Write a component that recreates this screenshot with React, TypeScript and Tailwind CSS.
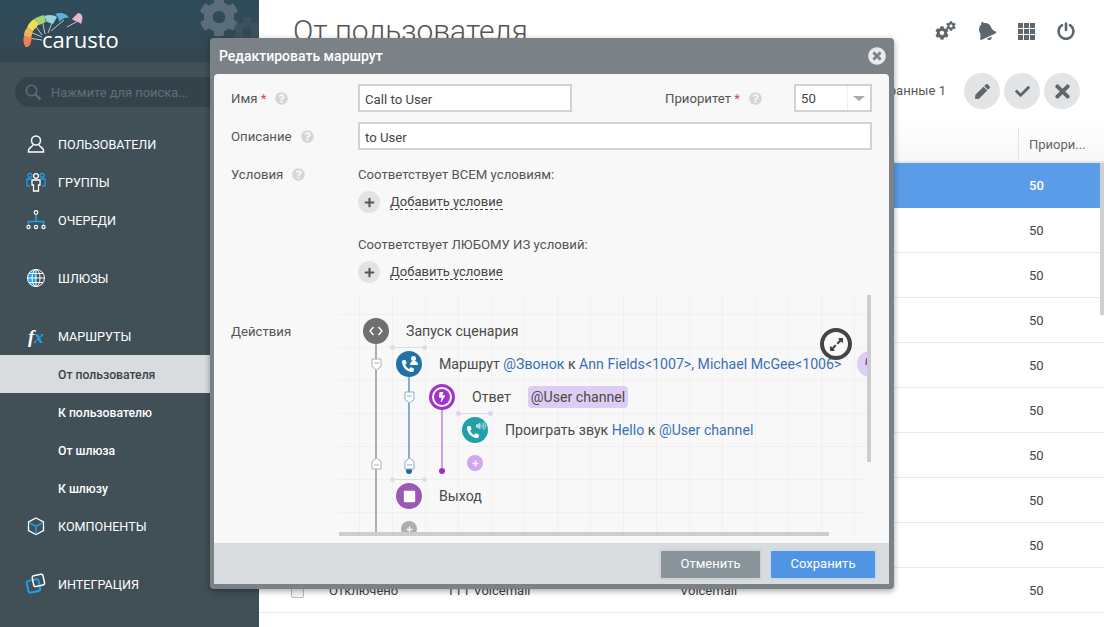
import { FaBell, FaCheck, FaCog, FaExpandAlt, FaPen, FaPhone, FaPlus, FaQuestionCircle, FaStop, FaTimes, FaTimesCircle, FaBolt, FaVolumeUp } from "react-icons/fa";

const Logo = () => (
  <svg width="66" height="36" viewBox="0 0 66 36" className="absolute left-[22px] top-[11px]">
    <g fill="none" strokeWidth="0.8" stroke="#dfe7ea">
      <path d="M20 29 L6 27 M20 26 L8 21 M20 24 L12 13 M23 23 L20 8 M26 22 L31 9 M29 20 L42 9 M45 16 L58 9" />
    </g>
    <path d="M4 37 C1 32 1 28 2 25 L10 27 L8 34 Z" fill="#ee7f58" />
    <path d="M2 25 C2 21 3 19 5 17 L11 20 L9 27 Z" fill="#f2b25a" />
    <path d="M5 17 C6 13 9 10 12 8 L17 13 L11 20 Z" fill="#ecdf58" />
    <path d="M12 8 C15 6 18 5 22 4 L24 11 L17 14 Z" fill="#a8d26b" />
    <path d="M22 5 C27 3 32 4 35 6 L31 13 L25 11 Z" fill="#8fd6e0" />
    <path d="M33 3 C38 1 45 2 47 7 C43 6 40 8 37 11 C37 8 36 5 33 3 Z" fill="#59aee2" />
    <path d="M56 2 C60 2 62 6 59 13 C56 10 52 10 50 8 C52 6 54 4 56 2 Z" fill="#eab3d2" />
  </svg>
);

const SearchIcon = () => (
  <svg width="17" height="17" viewBox="0 0 17 17" fill="none" stroke="#5d6c74">
    <circle cx="6.5" cy="6.5" r="5.2" strokeWidth="1.5" />
    <path d="M10.5 10.5 L15.5 15.5" strokeWidth="2.4" />
  </svg>
);

const UserIcon = () => (
  <svg width="20" height="20" viewBox="0 0 20 20" fill="none" stroke="#fff" strokeWidth="1.5">
    <circle cx="10" cy="6.5" r="4.5" />
    <path d="M7 10.5 C7 13 2.5 13.5 2.5 16.5 V18 H17.5 V16.5 C17.5 13.5 13 13 13 10.5" />
  </svg>
);

const GroupIcon = () => (
  <svg width="20" height="20" viewBox="0 0 20 20" fill="none" strokeWidth="1.3">
    <g stroke="#1da1e8">
      <circle cx="4" cy="3.5" r="2" />
      <circle cx="16" cy="3.5" r="2" />
      <path d="M1 14 V7 H5 M19 14 V7 H15 M1 14 H4 M19 14 H16" />
    </g>
    <g stroke="#fff">
      <circle cx="10" cy="4" r="2.4" />
      <path d="M6 8 H14 V13 H12.5 V19 H7.5 V13 H6 Z" />
    </g>
  </svg>
);

const QueueIcon = () => (
  <svg width="20" height="20" viewBox="0 0 20 20" fill="none" strokeWidth="1.2">
    <path d="M10 5 V12 M2.5 15 V11.5 H17.5 V15" stroke="#1da1e8" strokeWidth="1.6" />
    <g stroke="#fff">
      <circle cx="10" cy="2.5" r="1.8" />
      <circle cx="2.5" cy="17" r="1.6" />
      <circle cx="10" cy="17" r="1.6" />
      <circle cx="17.5" cy="17" r="1.6" />
    </g>
  </svg>
);

const GlobeIcon = () => (
  <svg width="20" height="20" viewBox="0 0 20 20" fill="none" strokeWidth="1">
    <path d="M10 1 A9 9 0 0 0 10 19 Z" fill="#1da1e8" />
    <g stroke="#fff">
      <circle cx="10" cy="10" r="8.5" />
      <ellipse cx="10" cy="10" rx="4" ry="8.5" />
      <path d="M10 1 V19 M1.5 10 H18.5 M3 5.5 H17 M3 14.5 H17" />
    </g>
  </svg>
);

const CubeIcon = () => (
  <svg width="20" height="20" viewBox="0 0 20 20" fill="none" strokeWidth="1.3">
    <path d="M10 2 L17.5 6 V14.5 L10 18.5 L2.5 14.5 V6 Z" stroke="#fff" />
    <path d="M3 6.5 L10 10.5 L17 6.5 M10 10.5 V18" stroke="#1da1e8" strokeWidth="1.5" />
  </svg>
);

const IntegrationIcon = () => (
  <svg width="20" height="22" viewBox="0 0 20 22" fill="none">
    <rect x="1.5" y="7" width="12" height="12" rx="2" stroke="#1da1e8" strokeWidth="2" transform="rotate(-12 7 13)" />
    <rect x="7" y="2" width="11" height="11" rx="2" stroke="#fff" strokeWidth="1.5" transform="rotate(-12 12 8)" />
  </svg>
);

const GridIcon = () => (
  <svg width="17" height="17" viewBox="0 0 17 17" fill="#5d686e">
    <rect x="0" y="0" width="5" height="5" />
    <rect x="6" y="0" width="5" height="5" />
    <rect x="12" y="0" width="5" height="5" />
    <rect x="0" y="6" width="5" height="5" />
    <rect x="6" y="6" width="5" height="5" />
    <rect x="12" y="6" width="5" height="5" />
    <rect x="0" y="12" width="5" height="5" />
    <rect x="6" y="12" width="5" height="5" />
    <rect x="12" y="12" width="5" height="5" />
  </svg>
);

const PowerIcon = () => (
  <svg width="18" height="18" viewBox="0 0 18 18" fill="none" stroke="#5d686e" strokeWidth="2.6" strokeLinecap="round">
    <path d="M5 3.2 A7.4 7.4 0 1 0 13 3.2" />
    <path d="M9 1.5 V8" />
  </svg>
);

const Marker = ({ color, up }: { color: string; up?: boolean }) => (
  <svg width="11" height="13" viewBox="0 0 11 13" className={up ? "rotate-180" : ""}>
    <path d="M1 1 H10 V8.5 L5.5 12 L1 8.5 Z" fill="#fff" stroke={color} strokeWidth="1" />
    <path d="M3 5 H8" stroke={color} strokeWidth="1" />
  </svg>
);

const Help = () => <FaQuestionCircle className="text-[13px] text-[#d6d6d6]" />;

const AddButton = () => (
  <div className="flex items-center gap-[10px] h-[22px]">
    <div className="w-[22px] h-[22px] rounded-full bg-[#e2e3e5] flex items-center justify-center">
      <FaPlus className="text-[11px] text-[#555]" />
    </div>
    <span className="text-[13px] text-[#444] border-b border-dashed border-[#444] leading-[15px]">Добавить условие</span>
  </div>
);

const navTop = [
  { label: "Пользователи", icon: <UserIcon />, cls: "" },
  { label: "Группы", icon: <GroupIcon />, cls: "" },
  { label: "Очереди", icon: <QueueIcon />, cls: "" },
  { label: "Шлюзы", icon: <GlobeIcon />, cls: "mt-5" },
];

const NavItem = ({ label, icon, cls }: { label: string; icon: React.ReactNode; cls?: string }) => (
  <div className={`h-[38px] flex items-center text-white ${cls}`}>
    <div className="w-[58px] pl-[26px] flex items-center">{icon}</div>
    <span className="text-[12.6px] uppercase mt-[2px]">{label}</span>
  </div>
);

const SubItem = ({ label, active }: { label: string; active?: boolean }) => (
  <div className={`h-[38px] flex items-center pl-[58px] text-[12.2px] font-medium ${active ? "bg-[#d8dcdf] text-[#3c4347]" : "text-white"}`}>
    <span className="mt-[2px]">{label}</span>
  </div>
);

const Sidebar = () => (
  <aside className="w-[259px] h-[627px] shrink-0 bg-[#414f56] overflow-hidden">
    <div className="relative h-[62px] overflow-hidden bg-gradient-to-b from-[#2f4c5c] to-[#34474f]">
      <Logo />
      <span className="absolute left-[42px] top-[22px] text-[22px] leading-[34px] text-white font-['Open_Sans',sans-serif]">carusto</span>
      <FaCog className="absolute left-[199px] top-[-3px] text-[40px] text-[#5a6d78]" />
      <FaCog className="absolute left-[232px] top-[17px] text-[30px] text-[#45596380]" />
    </div>
    <div className="pl-[15px] pt-[15px] h-[63px]">
      <div className="w-[300px] h-[30px] rounded-full bg-[#34434b] flex items-center pl-[10px] gap-[9px]">
        <SearchIcon />
        <span className="text-[12.9px] text-[#5f6f78] mt-[1px]">Нажмите для поиска...</span>
      </div>
    </div>
    {navTop.map((n) => (
      <NavItem key={n.label} {...n} />
    ))}
    <NavItem
      label="Маршруты"
      cls="mt-5"
      icon={
        <span className="ml-[2px] font-['Liberation_Serif',serif] italic font-bold text-[19px] leading-none">
          f<span className="text-[#1da1e8]">x</span>
        </span>
      }
    />
    <SubItem label="От пользователя" active />
    <SubItem label="К пользователю" />
    <SubItem label="От шлюза" />
    <SubItem label="К шлюзу" />
    <NavItem label="Компоненты" icon={<CubeIcon />} />
    <NavItem label="Интеграция" icon={<IntegrationIcon />} cls="mt-5" />
  </aside>
);

const RoundButton = ({ children }: { children: React.ReactNode }) => (
  <div className="w-[36px] h-[36px] rounded-full bg-[#e3e4e6] flex items-center justify-center text-[#5d686e]">{children}</div>
);

const Row = ({ active, last }: { active?: boolean; last?: boolean }) => (
  <div className={`h-[45px] flex items-center border-b pt-[2px] text-[13px] ${active ? "bg-[#5a9ce8] text-white font-medium border-[#5a9ce8]" : "border-[#e8e8e8] text-[#444]"}`}>
    {last ? (
      <>
        <div className="w-[32px] ml-[32px] flex">
          <div className="w-[13px] h-[13px] border border-[#bbb] rounded-[2px] bg-[#f6f6f6]" />
        </div>
        <span className="w-[118px] ml-[6px]">Отключено</span>
        <span className="w-[233px]">TTT Voicemail</span>
        <span className="w-[349px]">Voicemail</span>
      </>
    ) : (
      <div className="w-[770px]" />
    )}
    <span>50</span>
  </div>
);

const Main = () => (
  <main className="relative flex-1 h-[627px] bg-white overflow-hidden">
    <div className="h-[62px] flex items-center justify-between pl-[34px] pr-[18px]">
      <h1 className="text-[30px] font-light text-[#555] leading-[36px] -mt-[1px]">От пользователя</h1>
      <div className="flex items-center text-[#5d686e]">
        <div className="relative w-[40px] h-[20px]">
          <FaCog className="absolute left-[9px] top-[5px] text-[14px]" />
          <FaCog className="absolute left-[20px] top-[0px] text-[10px]" />
        </div>
        <div className="w-[40px] flex justify-center"><FaBell className="text-[20px] -rotate-[25deg]" /></div>
        <div className="w-[40px] flex justify-center"><GridIcon /></div>
        <div className="w-[40px] flex justify-center"><PowerIcon /></div>
      </div>
    </div>
    <div className="h-[56px] flex items-center justify-end pr-[24px] pt-[2px] gap-[4px]">
      <span className="text-[13.1px] text-[#555] mr-[14px]">Выбранные 1</span>
      <RoundButton><FaPen className="text-[15px]" /></RoundButton>
      <RoundButton><FaCheck className="text-[15px]" /></RoundButton>
      <RoundButton><FaTimes className="text-[21px]" /></RoundButton>
    </div>
    <div className="h-[45px] flex items-stretch pl-[759px] bg-gradient-to-b from-white to-[#f7f7f7] border-b-2 border-[#e6e6e6] pt-[10px]">
      <div className="flex items-center border-l border-[#e4e4e4] pl-[10px] text-[13px] text-[#666] w-[80px] whitespace-nowrap">Приори...</div>
    </div>
    <Row active />
    {Array.from({ length: 8 }).map((_, i) => (
      <Row key={i} />
    ))}
    <Row last />
    <div className="absolute right-0 top-[163px] w-[4px] h-[152px] bg-[#cfcfcf]" />
  </main>
);

const FlowRow = ({ cls, children }: { cls: string; children: React.ReactNode }) => (
  <div className={`absolute flex items-center gap-[17px] whitespace-nowrap text-[14.15px] text-[#4a4a4a] [&>span]:mt-[2px] ${cls}`}>{children}</div>
);

const Circle = ({ cls, children }: { cls: string; children: React.ReactNode }) => (
  <div className={`w-[26px] h-[26px] rounded-full shrink-0 flex items-center justify-center text-white ${cls}`}>{children}</div>
);

const Link = ({ children }: { children: React.ReactNode }) => <span className="text-[#3a6fb7]">{children}</span>;

const Handle = ({ cls, dot }: { cls: string; dot: string }) => (
  <div className={`absolute w-[33px] h-[1px] ${cls}`}>
    <div className={`absolute -left-[2px] -top-[2px] w-[5px] h-[5px] rounded-full ${dot}`} />
    <div className={`absolute -right-[2px] -top-[2px] w-[5px] h-[5px] rounded-full ${dot}`} />
  </div>
);

const FlowCanvas = () => (
  <div className="relative w-[532px] h-[241px] overflow-hidden">
    <div className="absolute left-0 top-0 w-[528px] h-[241px] overflow-hidden bg-[linear-gradient(to_right,#f0f0f0_1px,transparent_1px),linear-gradient(to_bottom,#f0f0f0_1px,transparent_1px)] bg-[size:33px_33px] bg-[position:20px_19px]">
      {/* линии веток */}
      <div className="absolute left-[36px] top-[49px] w-[2px] h-[192px] bg-[#aeaeae]" />
      <div className="absolute left-[69px] top-[80px] w-[2px] h-[92px] bg-[#85adcf]" />
      <div className="absolute left-[102px] top-[113px] w-[2px] h-[60px] bg-[#c9a3e4]" />
      <div className="absolute left-[67px] top-[173px] w-[6px] h-[6px] rounded-full bg-[#23699f]" />
      <div className="absolute left-[100px] top-[173px] w-[6px] h-[6px] rounded-full bg-[#9b30c9]" />

      <div className="absolute left-[32px] top-[63px]"><Marker color="#aeaeae" /></div>
      <div className="absolute left-[32px] top-[162px]"><Marker color="#aeaeae" up /></div>
      <div className="absolute left-[65px] top-[96px]"><Marker color="#85adcf" /></div>
      <div className="absolute left-[65px] top-[162px]"><Marker color="#85adcf" up /></div>

      <Handle cls="left-[53px] top-[52px] bg-[#dedede]" dot="bg-[#dedede]" />
      <Handle cls="left-[119px] top-[118px] bg-[#e5d3f2]" dot="bg-[#e5d3f2]" />
      <Handle cls="left-[53px] top-[184px] bg-[#dedede]" dot="bg-[#dedede]" />

      <FlowRow cls="left-[24px] top-[23px]">
        <Circle cls="bg-[#6f6f6f]">
          <svg width="14" height="10" viewBox="0 0 14 10" fill="none" stroke="#fff" strokeWidth="1.4">
            <path d="M4.5 1 L1 5 L4.5 9 M9.5 1 L13 5 L9.5 9" />
          </svg>
        </Circle>
        <span>Запуск сценария</span>
      </FlowRow>
      <FlowRow cls="left-[57px] top-[56px]">
        <Circle cls="bg-[#2272a8] relative">
          <FaPhone className="text-[12px] scale-x-[-1] mt-[4px] mr-[3px]" />
          <div className="absolute right-[6px] top-[5px] w-[5px] h-[5px] rounded-full bg-white" />
          <div className="absolute right-[4px] top-[10px] w-[8px] h-[4px] rounded-t-full bg-white" />
        </Circle>
        <span>
          Маршрут <Link>@Звонок</Link> к <Link>Ann Fields&lt;1007&gt;, Michael McGee&lt;1006&gt;</Link>
        </span>
        <div className="w-[26px] h-[26px] -ml-px rounded-full bg-[#dfcdf2] flex items-center pl-[6px]">
          <FaBolt className="text-[12px] text-[#7d4ac2]" />
        </div>
      </FlowRow>
      <FlowRow cls="left-[90px] top-[89px]">
        <div className="w-[26px] h-[26px] rounded-full border-[3px] border-[#a233cf] bg-white flex items-center justify-center shrink-0">
          <div className="w-[16px] h-[16px] rounded-full bg-[#a233cf] flex items-center justify-center">
            <FaBolt className="text-[10px] text-white" />
          </div>
        </div>
        <span>Ответ</span>
        <div className="bg-[#decdf3] rounded-[4px] px-[3px] h-[22px] leading-[23px]">@User channel</div>
      </FlowRow>
      <FlowRow cls="left-[123px] top-[122px]">
        <Circle cls="bg-[#21a0a8] relative">
          <FaPhone className="text-[12px] scale-x-[-1] mt-[4px] mr-[4px]" />
          <FaVolumeUp className="absolute right-[2px] top-[4px] text-[10px] text-[#b6e2e5]" />
        </Circle>
        <span>
          Проиграть звук <Link>Hello</Link> к <Link>@User channel</Link>
        </span>
      </FlowRow>
      <div className="absolute left-[128px] top-[160px] w-[16px] h-[16px] rounded-full bg-[#d3a6eb] flex items-center justify-center">
        <FaPlus className="text-[7px] text-white" />
      </div>
      <FlowRow cls="left-[57px] top-[188px]">
        <Circle cls="bg-[#9b59b6]"><FaStop className="text-[13px]" /></Circle>
        <span>Выход</span>
      </FlowRow>
      <div className="absolute left-[62px] top-[226px] w-[16px] h-[16px] rounded-full bg-[#aeaeae] flex items-center justify-center">
        <FaPlus className="text-[7px] text-white" />
      </div>

      <div className="absolute left-[481px] top-[33px] w-[32px] h-[32px] rounded-full border-[4px] border-[#444] bg-[#f8f8f8] flex items-center justify-center">
        <FaExpandAlt className="text-[15px] text-[#444]" />
      </div>
    </div>
    <div className="absolute left-[528px] top-0 w-[4px] h-[167px] bg-[#cdcdcd]" />
    <div className="absolute left-0 top-[237px] w-[490px] h-[4px] bg-[#cdcdcd]" />
  </div>
);

const Modal = () => (
  <div className="absolute left-[210px] top-[38px] w-[684px] h-[551px] rounded-[4px] bg-[#7a8288] pl-[4px] pr-[5px] pb-[5px] flex flex-col shadow-[0_2px_6px_rgba(0,0,0,0.35)]">
    <div className="h-[36px] shrink-0 flex items-center justify-between pl-[5px] pr-[3px]">
      <span className="text-[14px] font-medium text-white">Редактировать маршрут</span>
      <FaTimesCircle className="text-[18px] text-[#e8eaeb]" />
    </div>
    <div className="flex-1 rounded-t-[4px] bg-[#f8f8f8] pl-[17px] pt-[10px] overflow-hidden text-[13.2px] text-[#555] grid grid-cols-[127px_1fr] content-start">
      <div className="h-[28px] flex items-center gap-[9px]">
        <span className="mt-[2px]">Имя <span className="text-[#d9455f]">*</span></span>
        <Help />
      </div>
      <div className="h-[28px] flex items-center">
        <input readOnly value="Call to User" className="w-[214px] h-[28px] bg-white border-2 border-[#d2d2d2] pl-[5px] pt-[2px] text-[13.2px] text-[#444] outline-none" />
        <span className="ml-[93px] mt-[2px]">Приоритет <span className="text-[#d9455f]">*</span></span>
        <span className="ml-[9px] flex"><Help /></span>
        <div className="ml-[32px] w-[78px] h-[28px] bg-white border-2 border-[#d2d2d2] flex items-center text-[13.2px] text-[#444]">
          <span className="flex-1 pl-[5px] mt-[2px]">50</span>
          <div className="w-[23px] h-full border-l border-[#eee] flex items-center justify-center">
            <div className="w-0 h-0 border-x-[6px] border-x-transparent border-t-[5px] border-t-[#aaa]" />
          </div>
        </div>
      </div>

      <div className="h-[28px] mt-[10px] flex items-center gap-[9px]">
        <span className="mt-[2px]">Описание</span>
        <Help />
      </div>
      <div className="h-[28px] mt-[10px]">
        <input readOnly value="to User" className="w-[514px] h-[28px] bg-white border-2 border-[#d2d2d2] pl-[5px] pt-[2px] text-[13.2px] text-[#444] outline-none" />
      </div>

      <div className="mt-[16px] h-[16px] flex items-center gap-[9px] leading-[16px]">
        <span className="mt-[2px]">Условия</span>
        <Help />
      </div>
      <div className="mt-[17px] flex flex-col items-start">
        <span className="leading-[16px]">Соответствует ВСЕМ условиям:</span>
        <div className="mt-[8px]"><AddButton /></div>
        <span className="mt-[24px] leading-[16px]">Соответствует ЛЮБОМУ ИЗ условий:</span>
        <div className="mt-[8px]"><AddButton /></div>
      </div>

      <div className="mt-[12px] pt-[29px] leading-[16px]">Действия</div>
      <div className="mt-[12px] -ml-[19px]">
        <FlowCanvas />
      </div>
    </div>
    <div className="h-[41px] shrink-0 bg-[#d8dcdf] flex items-center justify-end gap-[7px] pr-[12px] pt-[1px]">
      <button className="w-[103px] h-[31px] rounded-[3px] border-2 border-[#cdd3d7] bg-[#88949a] text-[13px] text-white">Отменить</button>
      <button className="w-[108px] h-[31px] rounded-[3px] border-2 border-[#c8d9ec] bg-[#5094e4] text-[13px] text-white">Сохранить</button>
    </div>
  </div>
);

export default function App() {
  return (
    <div className="relative flex w-[1104px] h-[627px] overflow-hidden font-['Roboto',sans-serif]">
      <Sidebar />
      <Main />
      <Modal />
    </div>
  );
}
